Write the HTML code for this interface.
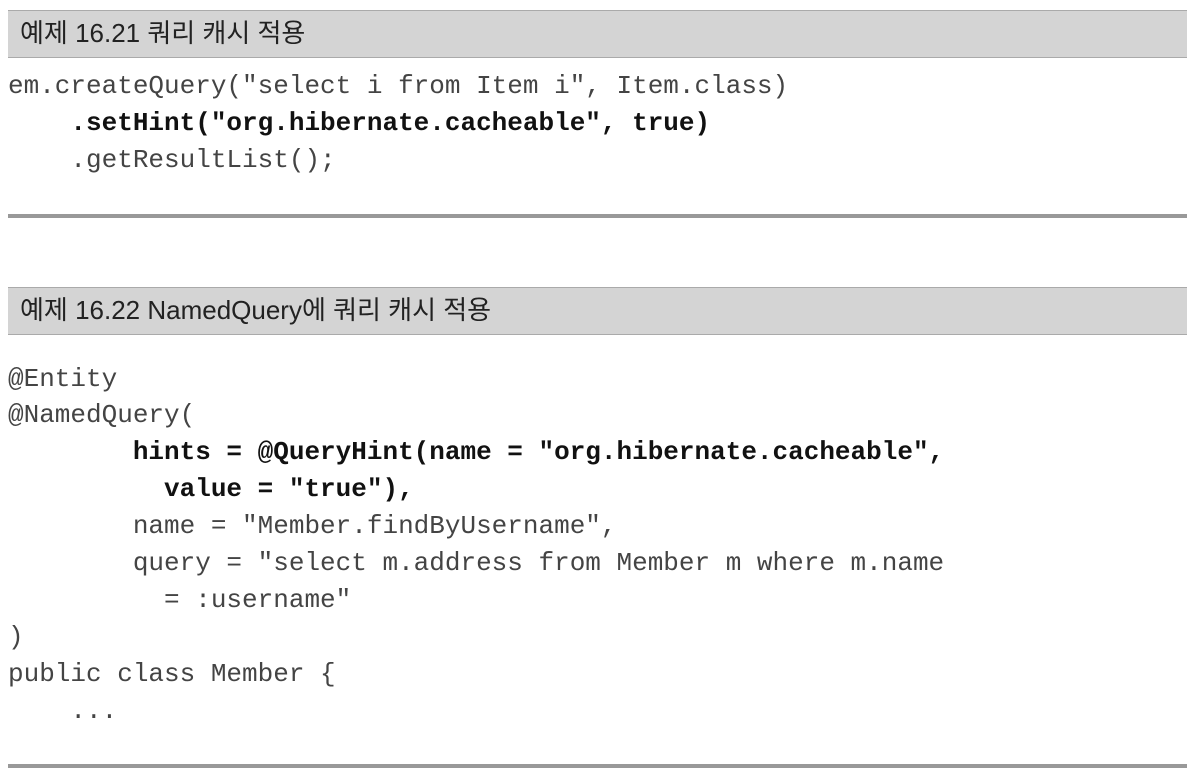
<!DOCTYPE html>
<html><head><meta charset="utf-8"><style>
body{margin:0;width:1202px;height:782px;background:#fff;position:relative;overflow:hidden}
.bar{position:absolute;left:8px;width:1179px;height:48px;background:#d4d4d4;border-top:1px solid #aaa;border-bottom:1px solid #aaa;box-sizing:border-box}
.bar span{position:absolute;left:12px;top:6px;font:26px/32px "Liberation Sans","Noto Sans CJK KR",sans-serif;color:#222;letter-spacing:0}
.rule{position:absolute;left:8px;width:1179px;height:4px;background:#999}
.l{position:absolute;left:8px;font-family:"Liberation Mono",monospace;font-size:26px;white-space:pre;color:#444;line-height:37px}
.k{font-weight:bold;color:#111}
</style></head><body>
<div class="bar" style="top:10px"><span>예제 16.21 쿼리 캐시 적용</span></div>
<div class="l" style="top:68px">em.createQuery("select i from Item i", Item.class)</div>
<div class="l k" style="top:105px">    .setHint("org.hibernate.cacheable", true)</div>
<div class="l" style="top:142px">    .getResultList();</div>
<div class="rule" style="top:214px"></div>

<div class="bar" style="top:287px"><span>예제 16.22 NamedQuery에 쿼리 캐시 적용</span></div>
<div class="l" style="top:361px">@Entity</div>
<div class="l" style="top:397px">@NamedQuery(</div>
<div class="l k" style="top:434px">        hints = @QueryHint(name = "org.hibernate.cacheable",</div>
<div class="l k" style="top:471px">          value = "true"),</div>
<div class="l" style="top:508px">        name = "Member.findByUsername",</div>
<div class="l" style="top:545px">        query = "select m.address from Member m where m.name</div>
<div class="l" style="top:582px">          = :username"</div>
<div class="l" style="top:619px">)</div>
<div class="l" style="top:656px">public class Member {</div>
<div class="l" style="top:693px">    ...</div>
<div class="rule" style="top:764px"></div>
</body></html>
